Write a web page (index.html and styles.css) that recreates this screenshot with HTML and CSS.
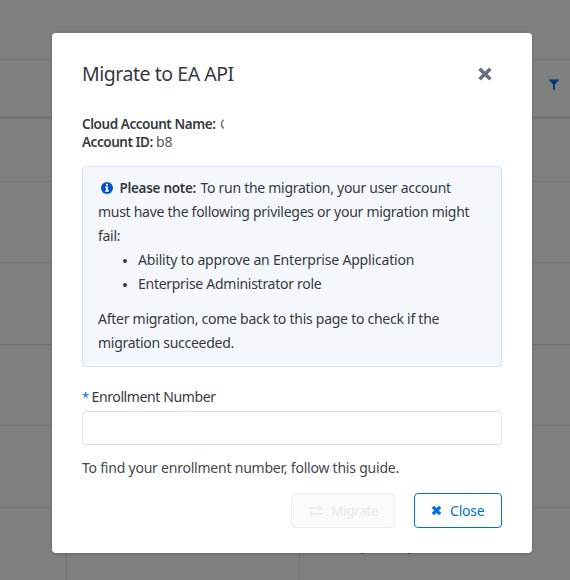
FILE: index.html
```html
<!DOCTYPE html>
<html lang="en">
<head>
<meta charset="utf-8">
<title>Migrate to EA API</title>
<link rel="stylesheet" href="styles.css">
</head>
<body>
<div class="table">
  <div class="toolbar"></div>
  <div class="table-head">
    <svg class="filter" viewBox="0 0 12 12"><path d="M.5.5h11L7 5.5v6L5 10V5.5z"/></svg>
  </div>
  <div class="row row-first"></div>
  <div class="row row-short"></div>
  <div class="row"></div>
  <div class="row row-short"></div>
  <div class="row"></div>
  <div class="row row-last"><span></span><span></span><span class="cell-text"><i>p</i><i>p</i></span></div>
</div>
<div class="overlay">
  <div class="modal">
    <header class="modal-head">
      <h1>Migrate to EA API</h1>
      <svg class="x-icon" viewBox="0 0 14 14"><path d="M2.2 2.4l9.6 9.2M11.8 2.4l-9.6 9.2"/></svg>
    </header>
    <div class="account">
      <div><b class="b-name">Cloud Account Name:</b><span class="clip">C</span></div>
      <div><b class="b-id">Account ID:</b><span class="acct">b8</span></div>
    </div>
    <section class="note">
      <div class="first-line">
        <svg class="info" viewBox="0 0 12 12"><circle cx="6" cy="6" r="6"/><path d="M5 1.8h2v1.7H5zM4.2 4.6H7v3.6h.9v1.5H4.2V8.2H5V6h-.8z"/></svg>
        <b class="b-note">Please note:</b><span class="l1">To run the migration, your user account</span>
      </div>
      <div class="l2">must have the following privileges or your migration might</div>
      <div class="l3">fail:</div>
      <ul>
        <li class="l4"><span>Ability to approve an Enterprise Application</span></li>
        <li class="l5"><span>Enterprise Administrator role</span></li>
      </ul>
      <div class="l6">After migration, come back to this page to check if the</div>
      <div class="l7">migration succeeded.</div>
    </section>
    <label class="label" for="enroll"><span class="star">*</span><span class="l8">Enrollment Number</span></label>
    <input id="enroll" class="field" type="text">
    <p class="help">To find your enrollment number, follow this guide.</p>
    <footer class="actions">
      <button class="btn migrate" disabled>
        <svg class="swap" viewBox="0 0 14 12"><path d="M0 2.3h10.5V0L14 3.2l-3.5 3.2V4.1H0zM14 7.9H3.5V5.6L0 8.8 3.5 12V9.7H14z"/></svg>
        <span>Migrate</span>
      </button>
      <button class="btn close">
        <svg class="x-icon small" viewBox="0 0 14 14"><path d="M2.4 2.4l9.2 9.2M11.6 2.4l-9.2 9.2"/></svg>
        <span>Close</span>
      </button>
    </footer>
  </div>
</div>
</body>
</html>
```
FILE: styles.css
```css
* { box-sizing: border-box; }
body {
  margin: 0;
  width: 570px;
  height: 580px;
  overflow: hidden;
  background: #808080;
  color: #363a3f;
  font: 14px/24px "Noto Sans", "Open Sans", sans-serif;
  white-space: nowrap;
}
.table { height: 580px; display: flex; flex-direction: column; }
.toolbar { height: 60px; flex: none; border-bottom: 1px solid #717273; }
.table-head { height: 59px; flex: none; border-bottom: 3px solid #717273; display: flex; justify-content: flex-end; padding: 19px 10px 0 0; }
.filter { width: 12px; height: 12px; fill: #003b78; }
.row { height: 82px; flex: none; border-bottom: 1px solid #717273; }
.row-first { height: 63px; }
.row-short { height: 81px; }
.row-last { height: 73px; border: 0; display: grid; grid-template-columns: 67px 233px 1fr; }
.row-last > span:not(:last-child) { border-right: 1px solid #717273; }
.cell-text { padding: 25px 0 0 61px; color: #1c1e20; display: flex; gap: 37px; }
.cell-text i { font-style: normal; }
.overlay { position: absolute; inset: 0; display: flex; justify-content: center; align-items: flex-start; padding: 33px 38px 0 52px; }
.modal { width: 480px; height: 520px; padding: 28px 30px 25px; background: #fff; border-radius: 4px; box-shadow: 0 1px 4px rgba(0, 0, 0, .18); }
.modal-head { height: 26px; display: flex; justify-content: space-between; align-items: center; padding-right: 9.5px; }
h1 { margin: 0; font-size: 19.5px; line-height: 26px; font-weight: 400; letter-spacing: -.46px; }
.x-icon { width: 16px; height: 16px; fill: none; stroke: #687080; stroke-width: 3.2; }
.account { margin-top: 28px; line-height: 18px; }
.account > div { display: flex; height: 18px; }
b { font-weight: 600; font-size: 13.5px; }
.b-name { width: 138px; letter-spacing: -.43px; }
.b-id { width: 74px; letter-spacing: -.45px; }
.clip { width: 4px; overflow: hidden; color: #6b6e73; }
.acct { color: #56595e; }
.note { margin-top: 15px; height: 201px; padding: 9px 15px 0; background: #f4f8fd; border: 1px solid #cfe3f7; border-radius: 4px; }
.first-line { display: flex; align-items: center; height: 24px; }
.info { width: 12px; height: 12px; margin: 0 7px 0 2.5px; fill: #0052cc; }
.info path { fill: #fff; }
.b-note { width: 81px; letter-spacing: -.3px; }
ul { margin: 0 0 11px; padding-left: 25px; list-style: none; }
li { display: flex; align-items: center; }
li::before { content: ""; width: 4px; height: 4px; margin: 2px 11px 0 0; border-radius: 50%; background: #363a3f; }
.l1, .l2, .l3, .l5, .l7 { letter-spacing: -.28px; }
.l4 { letter-spacing: -.18px; }
.l6 { letter-spacing: -.26px; }
.l8 { letter-spacing: -.38px; }
.label { display: flex; margin-top: 18px; height: 24px; }
.star { width: 9.5px; font-size: 13px; color: #0070e0; }
.field { display: block; width: 420px; height: 34px; margin-top: 2px; border: 1px solid #dde2e7; border-radius: 4px; background: #fff; }
.help { margin: 11px 0 0; color: #43474e; letter-spacing: -.22px; }
.actions { display: flex; justify-content: flex-end; gap: 19px; margin-top: 13px; }
.btn { height: 35px; display: flex; align-items: center; border: 1px solid #0070d8; border-radius: 4px; background: #fff; color: #0070d8; font: 14px/24px "Noto Sans", sans-serif; letter-spacing: -.2px; padding: 0 0 0 16px; }
.migrate { width: 104px; border-color: #eaedef; background: #f8fafc; color: #eaecef; }
.migrate span { font-weight: 500; letter-spacing: -.75px; }
.swap { width: 15px; height: 12px; margin-right: 8px; fill: #eaecef; }
.close { width: 88px; }
.small { width: 11px; height: 11px; margin-right: 8px; stroke: #0070d8; stroke-width: 4.2; }
```
